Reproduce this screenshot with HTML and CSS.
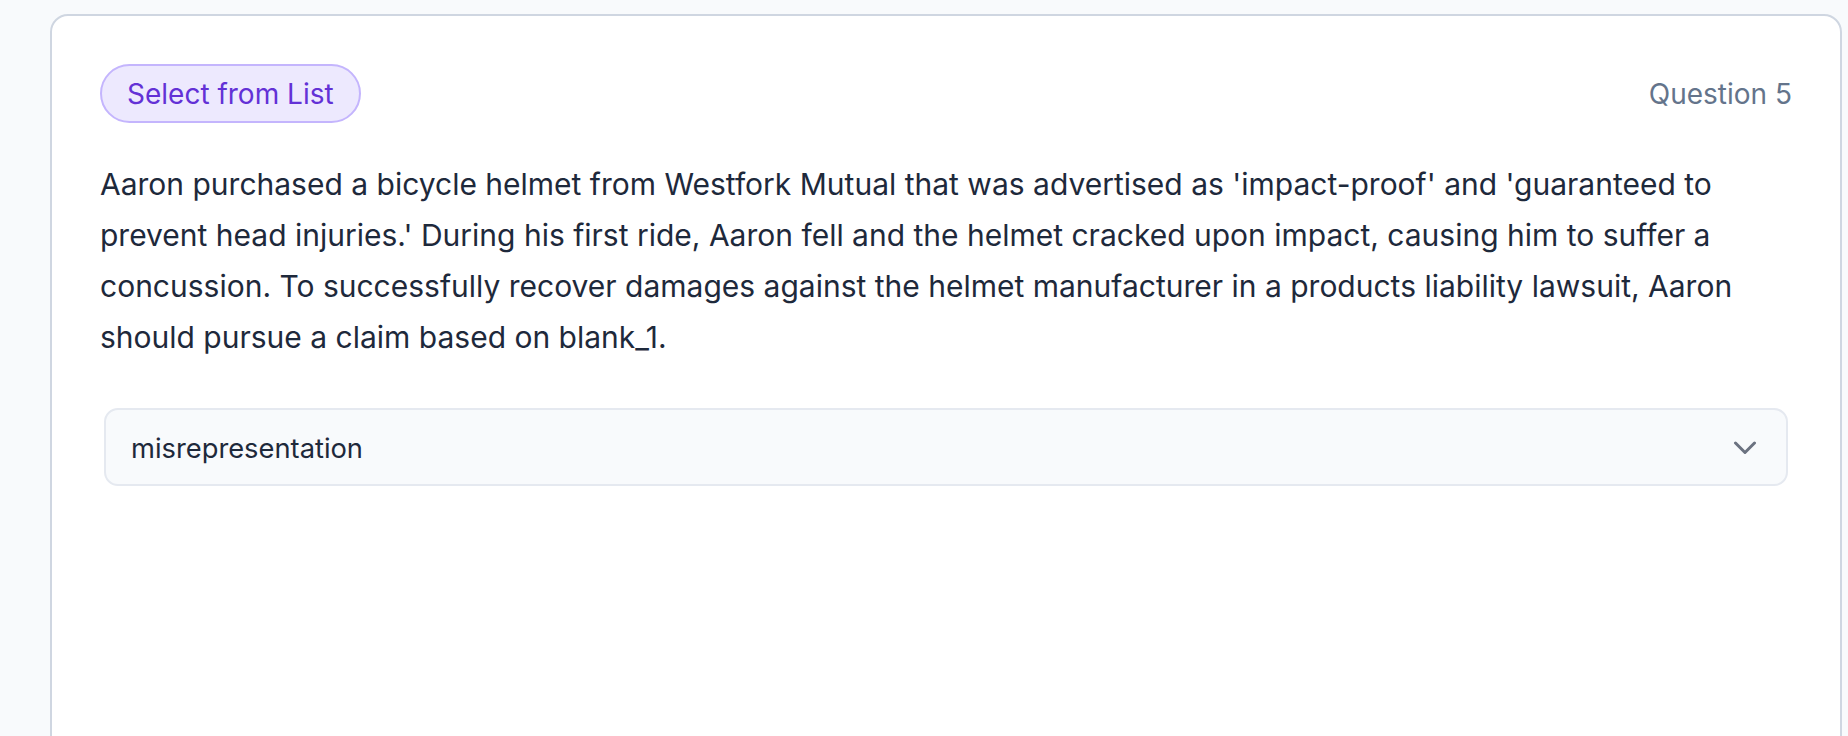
FILE: index.html
```html
<!DOCTYPE html>
<html lang="en">
<head>
<meta charset="utf-8">
<title>Question 5</title>
<link rel="stylesheet" href="styles.css">
</head>
<body>
<main class="page">
  <section class="card">
    <header class="card-header">
      <span class="badge">Select from List</span>
      <span class="q-number">Question 5</span>
    </header>
    <p class="prompt">Aaron purchased a bicycle helmet from Westfork Mutual that was advertised as 'impact-proof' and 'guaranteed to prevent head injuries.' During his first ride, Aaron fell and the helmet cracked upon impact, causing him to suffer a concussion. To successfully recover damages against the helmet manufacturer in a products liability lawsuit, Aaron should pursue a claim based on blank_1.</p>
    <div class="select">
      <span class="select-value">misrepresentation</span>
      <svg class="chevron" width="24" height="14" viewBox="0 0 24 14" aria-hidden="true"><polyline points="2.5,2 12,11.5 21.5,2" fill="none" stroke="#6b7280" stroke-width="3" stroke-linecap="round" stroke-linejoin="round"/></svg>
    </div>
  </section>
</main>
</body>
</html>
```
FILE: styles.css
```css
* { box-sizing: border-box; }
html, body {
  margin: 0;
  padding: 0;
  background: #f8fafc;
  height: 100%;
  overflow: hidden;
}
body {
  font-family: Inter, "Noto Sans", sans-serif;
  color: #1e293b;
}
.page {
  padding: 14px 0 0 50px;
}
.card {
  width: 1792px;
  min-height: 900px;
  background: #ffffff;
  border: 2px solid #cfd6e1;
  border-radius: 18px;
  padding: 48px 48px 48px 48px;
}
.card-header {
  display: flex;
  align-items: center;
  justify-content: space-between;
}
.badge {
  display: inline-flex;
  align-items: center;
  height: 59px;
  padding: 0 25px;
  border: 2px solid #c4b5fd;
  background: #ede9fe;
  color: #6331d6;
  border-radius: 30px;
  font-size: 28px;
  line-height: 1;
}
.q-number {
  font-size: 28px;
  color: #64748b;
  line-height: 1;
}
.prompt {
  margin: 36px 0 0 0;
  font-size: 30px;
  line-height: 51px;
  color: #1e293b;
}
.select {
  margin: 45px 4px 0 4px;
  height: 78px;
  display: flex;
  align-items: center;
  justify-content: space-between;
  padding: 2px 29px 0 25px;
  background: #f8fafc;
  border: 2px solid #e5e9f0;
  border-radius: 14px;
}
.select-value {
  font-size: 27.3px;
  color: #1e293b;
}
.chevron {
  display: block;
}
```
